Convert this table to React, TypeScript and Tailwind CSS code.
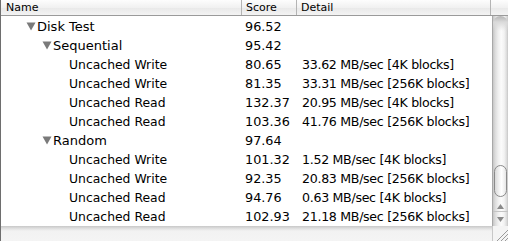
import React from "react";

type Row = { level: number; name: string; score: string; detail?: string; group?: boolean };

const rows: Row[] = [
  { level: 0, name: "Disk Test", score: "96.52", group: true },
  { level: 1, name: "Sequential", score: "95.42", group: true },
  { level: 2, name: "Uncached Write", score: "80.65", detail: "33.62 MB/sec [4K blocks]" },
  { level: 2, name: "Uncached Write", score: "81.35", detail: "33.31 MB/sec [256K blocks]" },
  { level: 2, name: "Uncached Read", score: "132.37", detail: "20.95 MB/sec [4K blocks]" },
  { level: 2, name: "Uncached Read", score: "103.36", detail: "41.76 MB/sec [256K blocks]" },
  { level: 1, name: "Random", score: "97.64", group: true },
  { level: 2, name: "Uncached Write", score: "101.32", detail: "1.52 MB/sec [4K blocks]" },
  { level: 2, name: "Uncached Write", score: "92.35", detail: "20.83 MB/sec [256K blocks]" },
  { level: 2, name: "Uncached Read", score: "94.76", detail: "0.63 MB/sec [4K blocks]" },
  { level: 2, name: "Uncached Read", score: "102.93", detail: "21.18 MB/sec [256K blocks]" },
];

const Tri = () => (
  <svg width="10" height="9" viewBox="0 0 10 9" className="shrink-0">
    <polygon points="0.5,0.5 9.5,0.5 5,8.5" fill="#7a7a7a" />
  </svg>
);

const indentClass = ["pl-[25px]", "pl-[41px]", "pl-[68px]"];

export default function App() {
  return (
    <div
      className="w-[508px] h-[241px] flex flex-col bg-white overflow-hidden border-l border-[#6e6e6e] text-black"
      style={{ fontFamily: '"DejaVu Sans", "Liberation Sans", sans-serif' }}
    >
      {/* Header */}
      <div className="h-[16px] flex shrink-0 border-b border-[#9a9a9a] bg-[linear-gradient(#fdfdfd,#f1f1f1_50%,#e8e8e8_51%,#f3f3f3)] text-[11px] leading-[15px]">
        <div className="w-[241px] border-r border-[#b4b4b4] pl-[5px]">Name</div>
        <div className="w-[55px] border-r border-[#b4b4b4] pl-[4px]">Score</div>
        <div className="w-[194px] border-r border-[#b4b4b4] pl-[4px]">Detail</div>
        <div className="flex-1" />
      </div>

      {/* Body */}
      <div className="h-[210px] flex shrink-0">
        <div className="flex-1 pt-px">
          {rows.map((r, i) => (
            <div key={i} className="h-[19px] flex items-center leading-[19px]">
              <div className={`w-[241px] flex items-center text-[12.4px] ${indentClass[r.level]}`}>
                {r.group && <Tri />}
                <span className={r.group ? "ml-[1px] text-[13px]" : ""}>{r.name}</span>
              </div>
              <div className="w-[56px] pl-[3px] text-[12.8px]">{r.score}</div>
              <div className="flex-1 pl-[4px] text-[12.6px] tracking-[-0.3px]">{r.detail ?? ""}</div>
            </div>
          ))}
        </div>

        {/* Scrollbar */}
        <div className="w-[16px] flex flex-col border-l border-[#a8a8a8] bg-[linear-gradient(90deg,#c6c6c6,#dcdcdc_15%,#efefef_35%,#fbfbfb_55%,#f2f2f2_75%,#dadada_92%,#c4c4c4)]">
          <div className="h-[15px] rounded-t-[8px] bg-[linear-gradient(#b4b4b4,#dadada_40%,transparent)]" />
          <div className="flex-1" />
          <div className="mx-[1px] h-[32px] rounded-[7px] border border-[#8a8a8a] bg-[linear-gradient(90deg,#d8d8d8,#f4f4f4_40%,#ffffff_60%,#e6e6e6)]" />
          <div className="h-[4px]" />
          <div className="h-[11px] flex items-center justify-center border-b border-[#c4c4c4]">
            <svg width="7" height="5" viewBox="0 0 7 5">
              <polygon points="3.5,0 7,5 0,5" fill="#8a8a8a" />
            </svg>
          </div>
          <div className="h-[14px] flex items-center justify-center">
            <svg width="7" height="5" viewBox="0 0 7 5">
              <polygon points="0,0 7,0 3.5,5" fill="#8a8a8a" />
            </svg>
          </div>
        </div>
      </div>

      {/* Bottom bar */}
      <div className="flex-1 flex bg-[linear-gradient(#c8c8c8,#e4e4e4_3px,#f2f2f2_5px,#f4f4f4)]">
        <div className="flex-1" />
        <div className="w-[16px] border-l border-[#c8c8c8] bg-[#f4f4f4] flex items-end justify-end">
          <svg width="14" height="14" viewBox="0 0 14 14">
            <line x1="3" y1="14" x2="14" y2="3" stroke="#9a9a9a" strokeWidth="1" />
            <line x1="7" y1="14" x2="14" y2="7" stroke="#9a9a9a" strokeWidth="1" />
            <line x1="11" y1="14" x2="14" y2="11" stroke="#9a9a9a" strokeWidth="1" />
          </svg>
        </div>
      </div>
    </div>
  );
}
